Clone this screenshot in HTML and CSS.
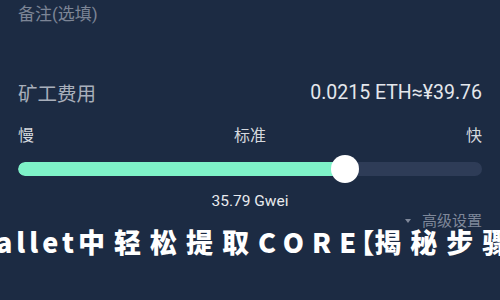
FILE: index.html
```html
<!DOCTYPE html>
<html lang="zh-CN">
<head>
<meta charset="utf-8">
<title>矿工费用</title>
<link rel="stylesheet" href="styles.css">
</head>
<body>
<div class="page">
  <div class="remark">备注(选填)</div>
  <div class="fee-row">
    <span class="fee-label">矿工费用</span>
    <span class="fee-value">0.0215 ETH≈¥39.76</span>
  </div>
  <div class="speed-labels">
    <span>慢</span>
    <span>标准</span>
    <span>快</span>
  </div>
  <div class="slider">
    <div class="track">
      <div class="fill" style="width: 70.5%"></div>
    </div>
    <div class="thumb" style="left: 70.5%"></div>
  </div>
  <div class="gwei">35.79 Gwei</div>
  <div class="advanced"><span class="arrow"></span>高级设置</div>
  <div class="title-overlay"><span class="lat">Wallet</span><span class="cjk">中轻松提取</span><span class="lat wide">CORE</span><span class="bracket">【</span><span class="cjk">揭秘步骤】</span></div>
</div>
</body>
</html>
```
FILE: styles.css
```css
html, body {
  margin: 0;
  padding: 0;
  background: #1c2b43;
}
body {
  width: 500px;
  height: 300px;
  overflow: hidden;
  font-family: Roboto, "Noto Sans CJK SC", sans-serif;
}
.page {
  position: relative;
  height: 300px;
  padding: 0 18px;
  box-sizing: border-box;
}
.remark {
  line-height: 28px;
  font-size: 17px;
  color: #7c8596;
}
.fee-row {
  margin-top: 50px;
  display: flex;
  justify-content: space-between;
  align-items: center;
  height: 28px;
}
.fee-label {
  font-size: 19.5px;
  color: #a8afbb;
}
.fee-value {
  font-size: 19.5px;
  color: #e4e7ec;
}
.speed-labels {
  margin-top: 20px;
  display: flex;
  justify-content: space-between;
  line-height: 20px;
  font-size: 16px;
  color: #d4d8de;
}
.slider {
  position: relative;
  margin-top: 9px;
  height: 28px;
  display: flex;
  align-items: center;
}
.track {
  flex: 1;
  height: 14px;
  border-radius: 7px;
  background: #2e3c57;
  overflow: hidden;
}
.fill {
  height: 100%;
  background: #7ef2c8;
  border-radius: 7px 0 0 7px;
}
.thumb {
  position: absolute;
  top: 0;
  width: 28px;
  height: 28px;
  margin-left: -14px;
  border-radius: 50%;
  background: #ffffff;
}
.gwei {
  margin-top: 8px;
  line-height: 20px;
  text-align: center;
  font-size: 15.5px;
  color: #e8eaee;
}
.advanced {
  margin-top: 0;
  line-height: 20px;
  display: flex;
  justify-content: flex-end;
  align-items: center;
  gap: 11px;
  font-size: 15px;
  color: #7f889a;
}
.arrow {
  width: 0;
  height: 0;
  border-left: 3px solid transparent;
  border-right: 3px solid transparent;
  border-top: 4px solid #7f889a;
}
.title-overlay {
  position: absolute;
  left: -33px;
  top: 224px;
  white-space: nowrap;
  font-family: "Noto Sans CJK SC", sans-serif;
  font-weight: 900;
  font-size: 27px;
  line-height: 36px;
  color: #ffffff;
}
.lat {
  letter-spacing: 4px;
}
.lat.wide {
  letter-spacing: 8px;
}
.bracket {
  margin-left: -17px;
}
.cjk {
  letter-spacing: 9px;
}
```
